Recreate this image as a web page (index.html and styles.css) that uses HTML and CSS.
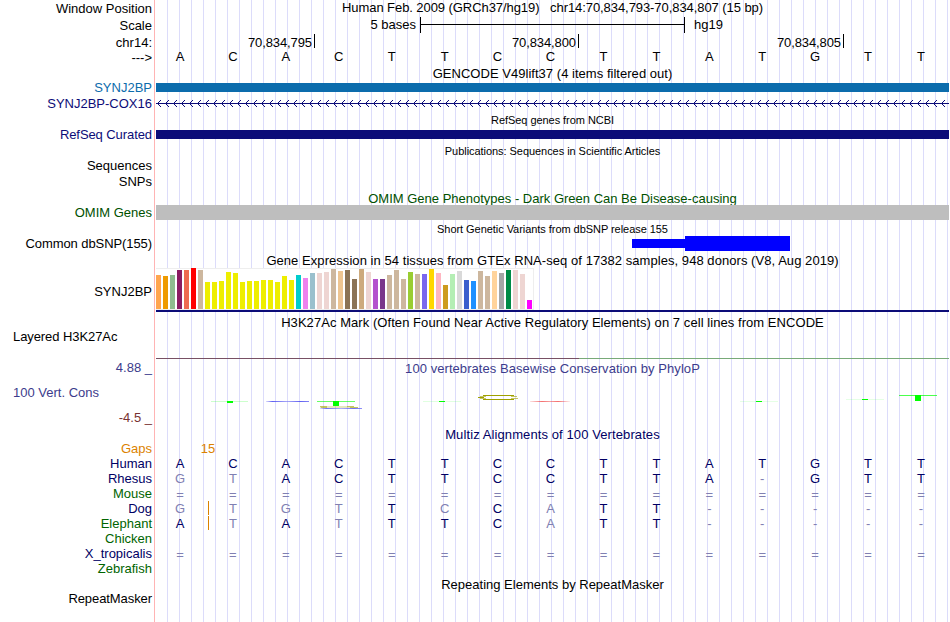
FILE: index.html
```
<!DOCTYPE html>
<html lang="en">
<head>
    <meta charset="UTF-8">
    <meta name="viewport" content="width=device-width, initial-scale=1.0">
    <title>Genome Browser hg19 chr14:70,834,793-70,834,807</title>
    <link rel="stylesheet" href="styles.css">
</head>
<body>
    <div class="browser">
        <div class="row position">
            <div class="label">Window Position</div>
            <div class="title">Human Feb. 2009 (GRCh37/hg19) &nbsp; chr14:70,834,793-70,834,807 (15 bp)</div>
        </div>
        <div class="row scale">
            <div class="label">Scale</div>
            <div class="track">
                <span class="scale-size">5 bases</span>
                <span class="scale-bar"></span>
                <span>hg19</span>
            </div>
        </div>
        <div class="row ruler">
            <div class="label">chr14:</div>
            <div class="track">
                <span class="tick">70,834,795</span>
                <span class="tick">70,834,800</span>
                <span class="tick">70,834,805</span>
            </div>
        </div>
        <div class="row sequence">
            <div class="label">---&gt;</div>
            <div class="bases" data-seq="ACACTTCCTTATGTT"></div>
        </div>

        <div class="title gencode-title">GENCODE V49lift37 (4 items filtered out)</div>
        <div class="row gene">
            <div class="label sky">SYNJ2BP</div>
            <div class="bar sky-bar"></div>
        </div>
        <div class="row intron">
            <div class="label blue">SYNJ2BP-COX16</div>
            <svg width="793" height="15" shape-rendering="crispEdges">
                <defs>
                    <pattern id="arrows" width="8" height="15" patternUnits="userSpaceOnUse">
                        <path d="M1 7h1v1h-1zM2 6h1v1h-1zM2 8h1v1h-1zM3 5h1v1h-1zM3 9h1v1h-1zM4 4h1v1h-1zM4 10h1v1h-1z" fill="#0c0c78"/>
                    </pattern>
                </defs>
                <rect width="793" height="15" fill="url(#arrows)"/>
                <rect y="7" width="793" height="1" fill="#0c0c78"/>
            </svg>
        </div>

        <div class="title small refseq-title">RefSeq genes from NCBI</div>
        <div class="row gene">
            <div class="label blue tight">RefSeq Curated</div>
            <div class="bar blue-bar"></div>
        </div>

        <div class="title small pubs-title">Publications: Sequences in Scientific Articles</div>
        <div class="row pubs"><div class="label">Sequences</div></div>
        <div class="row pubs"><div class="label">SNPs</div></div>

        <div class="title omim-title green">OMIM Gene Phenotypes - Dark Green Can Be Disease-causing</div>
        <div class="row omim">
            <div class="label green">OMIM Genes</div>
            <div class="bar grey-bar"></div>
        </div>

        <div class="title small snp-title">Short Genetic Variants from dbSNP release 155</div>
        <div class="row snp">
            <div class="label tight">Common dbSNP(155)</div>
            <div class="track">
                <span class="snp-thin"></span>
                <span class="snp-thick"></span>
            </div>
        </div>

        <div class="title gtex-title">Gene Expression in 54 tissues from GTEx RNA-seq of 17382 samples, 948 donors (V8, Aug 2019)</div>
        <div class="row gtex">
            <div class="label">SYNJ2BP</div>
            <div class="track"><div class="tissues" id="tissues"></div></div>
        </div>

        <div class="title h3k-title">H3K27Ac Mark (Often Found Near Active Regulatory Elements) on 7 cell lines from ENCODE</div>
        <div class="row h3k">
            <div class="label left tight">Layered H3K27Ac</div>
            <div class="track">
                <span class="signal-low"></span>
                <span class="signal-high"></span>
            </div>
        </div>

        <div class="row phylop-head">
            <div class="label indigo">4.88 _</div>
            <div class="title indigo">100 vertebrates Basewise Conservation by PhyloP</div>
        </div>
        <div class="row phylop">
            <div>
                <div class="label left indigo">100 Vert. Cons</div>
                <div class="label maroon">-4.5 _</div>
            </div>
            <svg width="793" height="49" viewBox="156 376 793 49">
                <defs>
                    <linearGradient id="fade">
                        <stop offset="0" stop-color="#5050f0" stop-opacity=".2"/>
                        <stop offset=".15" stop-color="#5050f0" stop-opacity=".9"/>
                        <stop offset=".5" stop-color="#5050f0" stop-opacity=".5"/>
                        <stop offset=".8" stop-color="#5050f0" stop-opacity=".9"/>
                        <stop offset="1" stop-color="#5050f0" stop-opacity=".7"/>
                    </linearGradient>
                    <linearGradient id="fadeRed">
                        <stop offset="0" stop-color="#f04040" stop-opacity=".15"/>
                        <stop offset=".3" stop-color="#f04040" stop-opacity=".75"/>
                        <stop offset=".5" stop-color="#f04040" stop-opacity=".5"/>
                        <stop offset=".7" stop-color="#f04040" stop-opacity=".75"/>
                        <stop offset="1" stop-color="#f04040" stop-opacity=".1"/>
                    </linearGradient>
                </defs>
                <g fill="#00ff00">
                    <rect x="211" y="401" width="37" height="1" opacity=".2"/>
                    <rect x="227" y="401" width="6" height="2"/>
                    <rect x="317" y="401" width="38" height="1" opacity=".6"/>
                    <rect x="333" y="401" width="6" height="5"/>
                    <rect x="423" y="401" width="38" height="1" opacity=".12"/>
                    <rect x="439" y="401" width="6" height="1"/>
                    <rect x="740" y="401" width="38" height="1" opacity=".1"/>
                    <rect x="756" y="401" width="6" height="1"/>
                    <rect x="846" y="399" width="38" height="1" opacity=".1"/>
                    <rect x="862" y="399" width="6" height="1"/>
                    <rect x="899" y="395" width="38" height="1" opacity=".7"/>
                    <rect x="915" y="395" width="6" height="6"/>
                </g>
                <rect x="266" y="401" width="43" height="1" fill="url(#fade)"/>
                <path d="M320 406.5h34M320 407.5h38" stroke="#a0a000" stroke-opacity=".25"/>
                <path d="M320 406.5h7M321 407.5h6M347 406.5h7M350 407.5h8" stroke="#a0a000" stroke-opacity=".5"/>
                <rect x="320" y="408" width="42" height="1" fill="url(#fade)" opacity=".9"/>
                <g fill="none" stroke="#a0a000">
                    <path d="M483 395.5h31M483 399.5h31"/>
                    <path d="M480 396.5h6M480 398.5h6M511 396.5h6M511 398.5h7" stroke-opacity=".6"/>
                    <path d="M478 397.5h6"/>
                </g>
                <rect x="530" y="401" width="40" height="1" fill="url(#fadeRed)"/>
            </svg>
        </div>

        <div class="title multiz-title navy">Multiz Alignments of 100 Vertebrates</div>
        <div class="row gaps">
            <div class="label orange">Gaps</div>
            <div class="track orange"><span class="gap-size">15</span></div>
        </div>
        <div class="row species">
            <div class="label navy">Human</div>
            <div class="bases" data-seq="ACACTTCCTTATGTT"></div>
        </div>
        <div class="row species">
            <div class="label navy">Rhesus</div>
            <div class="bases" data-seq="gtACTTCCTTA-GTT"></div>
        </div>
        <div class="row species">
            <div class="label forest">Mouse</div>
            <div class="bases" data-seq="==============="></div>
        </div>
        <div class="row species">
            <div class="label navy">Dog</div>
            <div class="bases gapped" data-seq="gtgtTcCaTT-----"></div>
        </div>
        <div class="row species">
            <div class="label forest">Elephant</div>
            <div class="bases gapped" data-seq="AtAtTTCaTT-----"></div>
        </div>
        <div class="row species">
            <div class="label forest">Chicken</div>
        </div>
        <div class="row species">
            <div class="label navy">X_tropicalis</div>
            <div class="bases" data-seq="==============="></div>
        </div>
        <div class="row species">
            <div class="label forest">Zebrafish</div>
        </div>

        <div class="title rmsk-title">Repeating Elements by RepeatMasker</div>
        <div class="row">
            <div class="label tight">RepeatMasker</div>
        </div>
    </div>
    <script src="browser.js"></script>
</body>
</html>
```
FILE: styles.css
```
body {
    margin: 0;
    background: #fff;
    color: #000;
    font: 13px/15px 'Liberation Sans', Arial, sans-serif;
}

.browser {
    width: 949px;
    height: 622px;
    overflow: hidden;
    /* guide lines every 12px, right of the label column */
    background:
        linear-gradient(#ffb4b4, #ffb4b4) 154px 0 / 1px 100% no-repeat,
        repeating-linear-gradient(to right, transparent 0 11px, #dcdcfa 11px 12px) 156px 0 no-repeat;
}

.row {
    display: grid;
    grid-template-columns: 152px 793px;
    column-gap: 4px;
}

.label {
    text-align: right;
    white-space: pre;
}

.label.left {
    text-align: left;
    padding-left: 13px;
}

.label.tight {
    letter-spacing: -0.08px;
}

.title {
    box-sizing: border-box;
    padding-left: 156px;
    text-align: center;
    white-space: nowrap;
}

.row .title {
    padding-left: 0;
}

.small {
    font-size: 11px;
    line-height: 14px;
    letter-spacing: -0.05px;
}

.track {
    display: flex;
}

/* colours */
.sky { color: #0c6cac; }
.blue { color: #0c0c78; }
.green { color: #005000; }
.forest { color: #006400; }
.indigo { color: #3c3c8c; }
.maroon { color: #783232; }
.navy { color: #000064; }
.orange { color: #dc8200; }

.sky-bar { background: #0c6cac; }
.blue-bar { background: #0c0c78; }
.grey-bar { background: #bebebe; }

/* ruler */
.position,
.scale {
    height: 17px;
}

.position .label,
.scale .label {
    padding-top: 1px;
}

.position .title {
    letter-spacing: -0.07px;
}

.scale-size {
    width: 260px;
    text-align: right;
}

.scale-bar {
    box-sizing: border-box;
    width: 265px;
    height: 16px;
    margin: 0 9px 0 4px;
    border: solid #000;
    border-width: 0 1px;
    background: linear-gradient(#000, #000) 0 7px / 100% 1px no-repeat;
}

.ruler {
    height: 15px;
}

.ruler .label {
    padding-top: 1px;
}

.tick {
    box-sizing: border-box;
    width: 264px;
    height: 14px;
    padding: 1px 2px 0 0;
    border-right: 1px solid #000;
    text-align: right;
    letter-spacing: -0.1px;
}

.tick:first-child {
    width: 159px;
}

.tick:last-child {
    width: 265px;
}

.sequence {
    height: 15px;
}

.sequence .label {
    padding-top: 1px;
}

.bases {
    display: grid;
    grid-template-columns: repeat(15, 1fr);
    width: 794px;
    margin-left: -2.5px;
    text-align: center;
}

/* genes */
.gencode-title {
    height: 19px;
    padding-top: 2px;
    letter-spacing: 0.03px;
}

.gene {
    height: 9px;
    line-height: 9px;
}

.intron {
    height: 15px;
    margin-top: 4px;
}

.refseq-title {
    height: 19px;
    padding-top: 2px;
}

.pubs-title {
    height: 19px;
    padding-top: 5px;
}

.pubs {
    height: 16px;
}

.omim-title {
    height: 15px;
    padding-top: 1px;
    overflow: hidden;
}

.omim,
.snp {
    height: 15px;
}

.snp-title {
    height: 16px;
    padding-top: 2px;
}

.snp .track {
    align-items: center;
}

.snp-thin {
    width: 53px;
    height: 9px;
    margin-left: 476px;
    background: #00f;
}

.snp-thick {
    width: 105px;
    height: 15px;
    background: #00f;
}

/* expression */
.gtex-title {
    height: 17px;
    padding-top: 2px;
    letter-spacing: 0.055px;
}

.gtex {
    height: 44px;
}

.gtex .label {
    padding-top: 16px;
}

.gtex .track {
    box-sizing: border-box;
    height: 44px;
    border-bottom: 2px solid #0c0c78;
}

.tissues {
    box-sizing: border-box;
    display: flex;
    align-items: flex-end;
    gap: 2px;
    width: 378px;
    height: 42px;
    border: solid #eee;
    border-width: 0 1px 1px 0;
    background: linear-gradient(#eee, #eee) 0 0 / 100% 1px no-repeat #fff;
}

.tissue {
    width: 5px;
}

.h3k-title {
    height: 17px;
    padding-top: 3px;
    letter-spacing: 0.06px;
}

.h3k {
    height: 30px;
}

.h3k .track {
    align-items: flex-end;
}

.signal-low {
    width: 423px;
    height: 1px;
    background: #785064;
}

.signal-high {
    width: 370px;
    height: 1px;
    background: #78aa78;
}

/* conservation */
.phylop-head {
    height: 17px;
}

.phylop-head .label {
    padding-top: 1px;
}

.phylop-head .title {
    padding-top: 2px;
    letter-spacing: 0.06px;
}

.phylop {
    height: 49px;
}

.phylop .left {
    padding-top: 9px;
    padding-bottom: 10px;
}

.multiz-title {
    height: 16px;
    padding-top: 2px;
    letter-spacing: 0.1px;
}

.gaps,
.species {
    height: 15px;
}

.gap-size {
    width: 104px;
    text-align: center;
}

.species .bases {
    color: #000064;
}

.species .mismatch {
    color: #8080b2;
}

.species .unaligned {
    padding-top: 1px;
}

/* insertion marker between the first two bases */
.gapped {
    background: linear-gradient(#dc8200, #dc8200) 54.5px 0 / 1px 14px no-repeat;
}

.rmsk-title {
    height: 15px;
    padding-top: 1px;
}
```
FILE: browser.js
```
// [colour, bar height] per GTEx tissue
const tissues = [
    ['#ffa54f', 34], ['#ee9a00', 33], ['#8fbc8f', 34], ['#8b1c62', 39], ['#ee6a50', 39], ['#ff0000', 41],
    ['#cdb79e', 39], ['#eeee00', 27], ['#eeee00', 27], ['#eeee00', 28], ['#eeee00', 37], ['#eeee00', 36],
    ['#eeee00', 27], ['#eeee00', 28], ['#eeee00', 28], ['#eeee00', 29], ['#eeee00', 29], ['#eeee00', 27],
    ['#eeee00', 33], ['#eeee00', 29], ['#00cdcd', 34], ['#ee82ee', 31], ['#9ac0cd', 36], ['#eed5d2', 36],
    ['#eed5d2', 37], ['#cdb79e', 40], ['#eec591', 38], ['#8b7355', 39], ['#8b7355', 30], ['#cdaa7d', 40],
    ['#eed5d2', 37], ['#b452cd', 30], ['#7a378b', 30], ['#cdb79e', 34], ['#cdb79e', 39], ['#cdb79e', 30],
    ['#9acd32', 37], ['#cdb79e', 35], ['#7a67ee', 35], ['#ffd700', 40], ['#ffb6c1', 36], ['#cd9b1d', 24],
    ['#b4eeb4', 35], ['#d9d9d9', 38], ['#3a5fcd', 29], ['#1e90ff', 28], ['#cdb79e', 38], ['#cdb79e', 33],
    ['#ffd39b', 38], ['#a6a6a6', 36], ['#008b45', 39], ['#eed5d2', 39], ['#eed5d2', 35], ['#ff00ff', 9]
];

const chart = document.getElementById('tissues');
tissues.forEach(([color, height]) => {
    const bar = document.createElement('div');
    bar.className = 'tissue';
    bar.style.background = color;
    bar.style.height = height + 'px';
    chart.appendChild(bar);
});

// lower case, "-" and "=" are drawn dimmed
document.querySelectorAll('.bases').forEach(row => {
    for (const base of row.dataset.seq) {
        const cell = document.createElement('span');
        cell.textContent = base.toUpperCase();
        if (!/[A-Z]/.test(base)) cell.classList.add('mismatch');
        if (base === '=') cell.classList.add('unaligned');
        row.appendChild(cell);
    }
});
```
